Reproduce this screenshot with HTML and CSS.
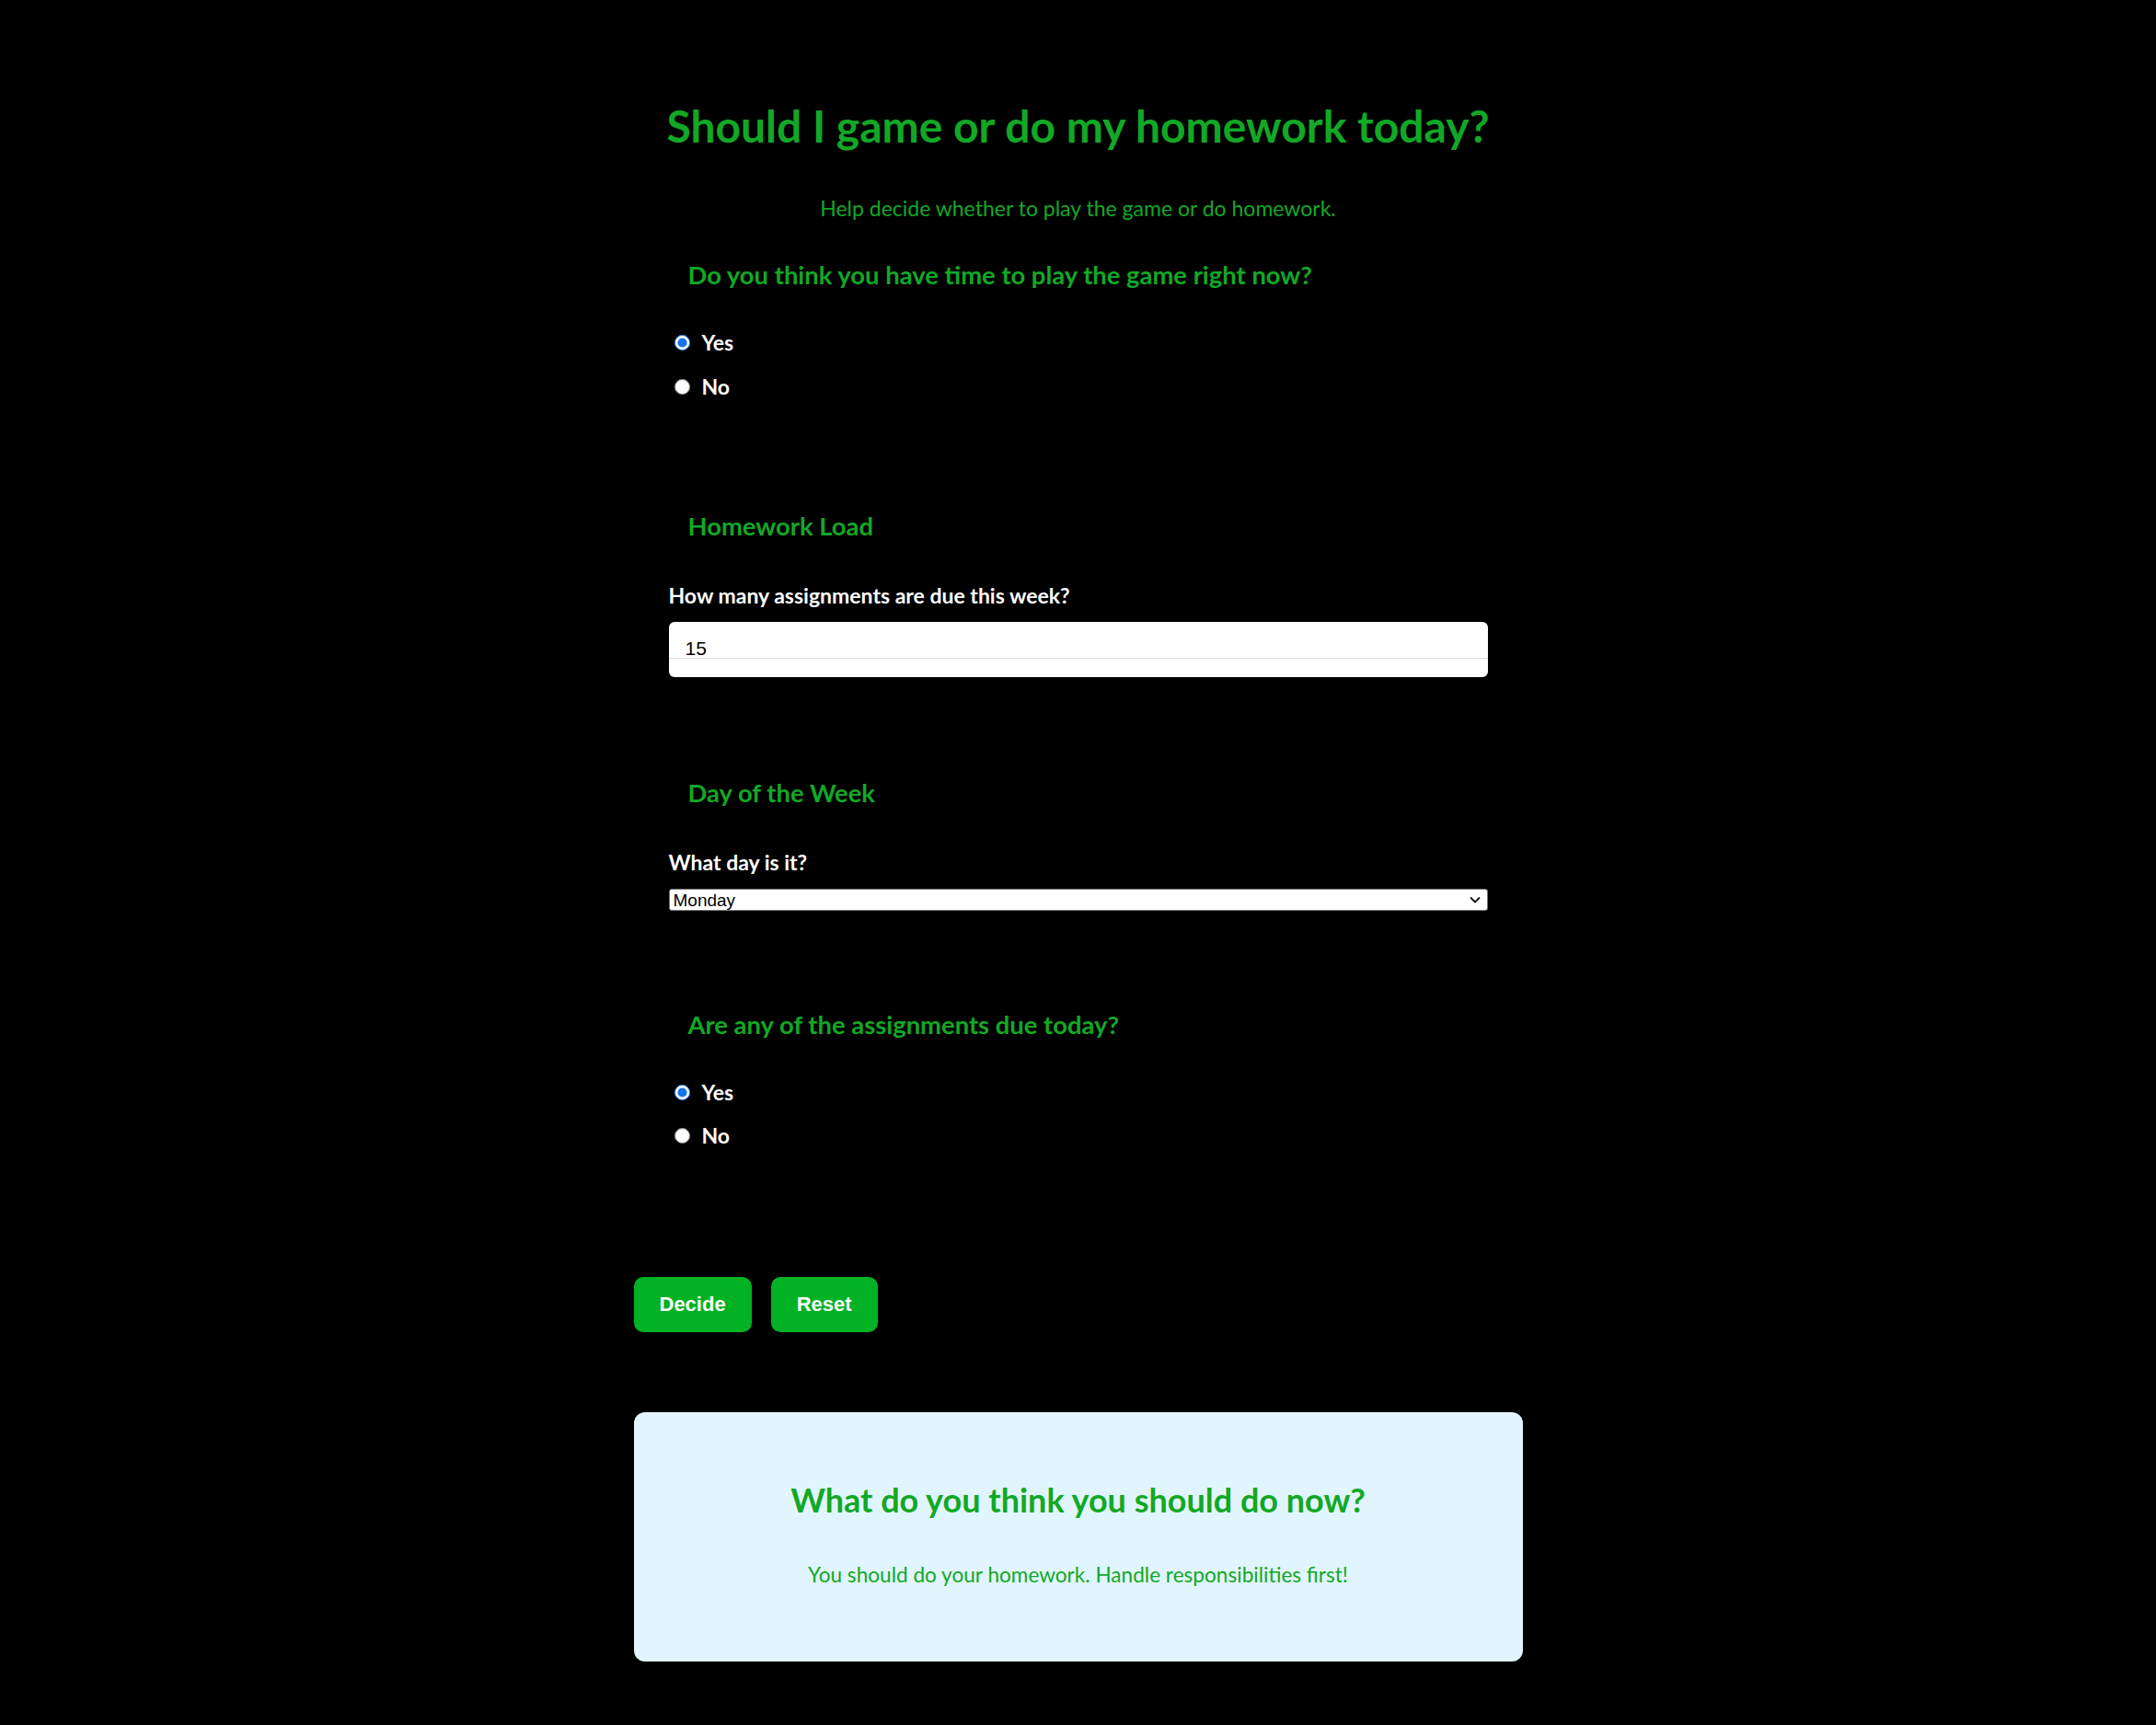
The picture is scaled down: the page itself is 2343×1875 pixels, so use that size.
FILE: index.html
```html
<!DOCTYPE html>
<html lang="en">
<head>
<meta charset="utf-8">
<title>Should I game or do my homework today?</title>
<link rel="stylesheet" href="styles.css">
</head>
<body>
<main class="container">
  <h1 class="title">Should I game or do my homework today?</h1>
  <p class="subtitle">Help decide whether to play the game or do homework.</p>

  <section class="group group-time">
    <h3 class="group-title">Do you think you have time to play the game right now?</h3>
    <div class="options">
      <label class="option"><input type="radio" name="time" checked><span>Yes</span></label>
      <label class="option"><input type="radio" name="time"><span>No</span></label>
    </div>
  </section>

  <section class="group group-load">
    <h3 class="group-title">Homework Load</h3>
    <label class="field-label" for="count">How many assignments are due this week?</label>
    <input class="text-input" id="count" type="text" value="15">
  </section>

  <section class="group group-day">
    <h3 class="group-title">Day of the Week</h3>
    <label class="field-label" for="day">What day is it?</label>
    <div class="select-wrap">
      <select class="select" id="day">
        <option>Monday</option>
        <option>Tuesday</option>
        <option>Wednesday</option>
        <option>Thursday</option>
        <option>Friday</option>
        <option>Saturday</option>
        <option>Sunday</option>
      </select>
      <svg class="chevron" viewBox="0 0 12 8" width="12" height="8"><path d="M1 1.5 L6 6.5 L11 1.5" fill="none" stroke="#111" stroke-width="1.8"/></svg>
    </div>
  </section>

  <section class="group group-due">
    <h3 class="group-title">Are any of the assignments due today?</h3>
    <div class="options options-tight">
      <label class="option"><input type="radio" name="due" checked><span>Yes</span></label>
      <label class="option"><input type="radio" name="due"><span>No</span></label>
    </div>
  </section>

  <div class="actions">
    <button class="btn" type="button">Decide</button>
    <button class="btn" type="button">Reset</button>
  </div>

  <section class="result">
    <h2 class="result-title">What do you think you should do now?</h2>
    <p class="result-text">You should do your homework. Handle responsibilities first!</p>
  </section>
</main>
</body>
</html>
```
FILE: styles.css
```css
html, body {
  margin: 0;
  padding: 0;
  background: #000;
}

body {
  font-family: "Segoe UI", Lato, "Open Sans", sans-serif;
  color: #fff;
}

.container {
  width: 966px;
  margin: 0 auto;
  padding-bottom: 60px;
}

.title {
  margin: 109px 0 0;
  font-size: 48px;
  line-height: 56px;
  font-weight: 700;
  color: #12a826;
  text-align: center;
}

.subtitle {
  margin: 46px 0 0;
  font-size: 23px;
  line-height: 30px;
  color: #12a826;
  text-align: center;
}

.group {
  margin: 0 38px;
  display: flex;
  flex-direction: column;
}

.group-time { margin-top: 42px; }
.group-load { margin-top: 120px; }
.group-day { margin-top: 110px; }
.group-due { margin-top: 108px; }

.group-title {
  margin: 0;
  padding-left: 21px;
  font-size: 27.4px;
  line-height: 32px;
  font-weight: 700;
  color: #12a826;
}

.options {
  margin-top: 41px;
  display: flex;
  flex-direction: column;
  gap: 16px;
}

.options-tight {
  gap: 15px;
}

.option {
  display: flex;
  align-items: center;
  height: 32px;
  padding-left: 6px;
  font-size: 23px;
  font-weight: 700;
  color: #fff;
}

.option input {
  width: 17px;
  height: 17px;
  margin: 0 13px 0 0;
  accent-color: #1a73e8;
}

.field-label {
  margin-top: 45px;
  font-size: 23px;
  line-height: 28px;
  font-weight: 700;
  color: #fff;
}

.text-input {
  margin-top: 15px;
  height: 60px;
  box-sizing: border-box;
  border: none;
  border-radius: 6px;
  padding: 0 18px 2px;
  font-family: "Liberation Sans", Arial, sans-serif;
  font-size: 21px;
  color: #000;
  background: linear-gradient(#fff 0, #fff 39px, #d9d9d9 39px, #d9d9d9 40px, #fff 40px);
  outline: none;
}

.select-wrap {
  position: relative;
  margin-top: 15px;
  height: 24px;
}

.select {
  appearance: none;
  -webkit-appearance: none;
  width: 100%;
  height: 24px;
  box-sizing: border-box;
  border: 1px solid #767676;
  border-radius: 3px;
  padding: 0 4px;
  background: #fff;
  font-family: "Liberation Sans", Arial, sans-serif;
  font-size: 19px;
  color: #000;
}

.chevron {
  position: absolute;
  right: 8px;
  top: 8px;
  pointer-events: none;
}

.actions {
  margin-top: 138px;
  display: flex;
  gap: 21px;
}

.btn {
  height: 60px;
  padding: 0 28px;
  border: none;
  border-radius: 10px;
  background: #00b224;
  color: #fff;
  font-family: "Liberation Sans", Arial, sans-serif;
  font-size: 22px;
  font-weight: 700;
}

.result {
  margin-top: 87px;
  height: 271px;
  box-sizing: border-box;
  background: #e1f5fe;
  border-radius: 12px;
  display: flex;
  flex-direction: column;
  align-items: center;
  padding-top: 73px;
}

.result-title {
  margin: 0;
  font-size: 36px;
  line-height: 44px;
  font-weight: 700;
  color: #12a826;
}

.result-text {
  margin: 45px 0 0;
  font-size: 22.6px;
  line-height: 30px;
  color: #12a826;
}
```
